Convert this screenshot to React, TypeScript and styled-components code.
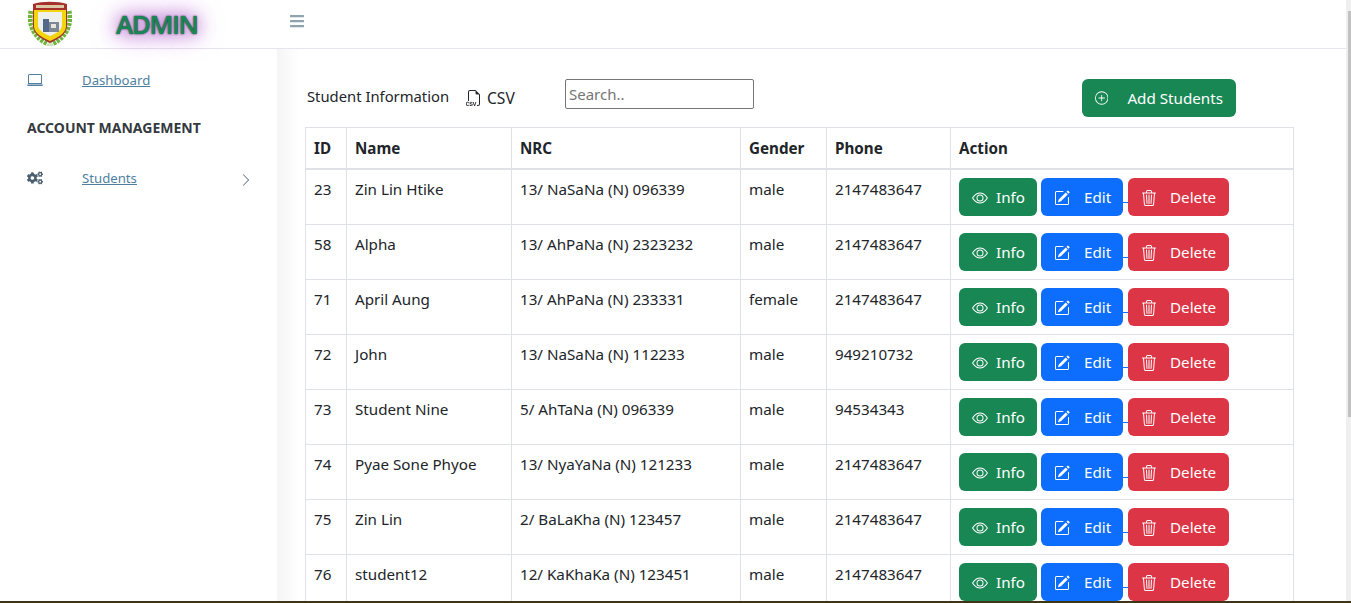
import React from "react";
import styled, { createGlobalStyle } from "styled-components";
import { BsEye, BsFiletypeCsv, BsChevronRight, BsLaptop, BsPencilSquare, BsPlusCircle, BsTrash3 } from "react-icons/bs";
import { FaBars, FaCogs } from "react-icons/fa";

const students = [
  { id: 23, name: "Zin Lin Htike", nrc: "13/ NaSaNa (N) 096339", gender: "male", phone: "2147483647" },
  { id: 58, name: "Alpha", nrc: "13/ AhPaNa (N) 2323232", gender: "male", phone: "2147483647" },
  { id: 71, name: "April Aung", nrc: "13/ AhPaNa (N) 233331", gender: "female", phone: "2147483647" },
  { id: 72, name: "John", nrc: "13/ NaSaNa (N) 112233", gender: "male", phone: "949210732" },
  { id: 73, name: "Student Nine", nrc: "5/ AhTaNa (N) 096339", gender: "male", phone: "94534343" },
  { id: 74, name: "Pyae Sone Phyoe", nrc: "13/ NyaYaNa (N) 121233", gender: "male", phone: "2147483647" },
  { id: 75, name: "Zin Lin", nrc: "2/ BaLaKha (N) 123457", gender: "male", phone: "2147483647" },
  { id: 76, name: "student12", nrc: "12/ KaKhaKa (N) 123451", gender: "male", phone: "2147483647" },
];

const Logo = () => (
  <svg width="44" height="46" viewBox="0 0 44 46">
    {/* laurel */}
    <path d="M3 10 C0 22 5 36 20 43" fill="none" stroke="#6fb23c" strokeWidth="5" strokeDasharray="3 1" />
    <path d="M41 10 C44 22 39 36 24 43" fill="none" stroke="#6fb23c" strokeWidth="5" strokeDasharray="3 1" />
    <path d="M22 40 L19 45 L25 45 Z" fill="#cfe3bd" />
    {/* shield */}
    <path d="M5 3 C14 0 30 0 39 3 L39 26 C38 34 30 38 22 42 C14 38 6 34 5 26 Z" fill="#a5302c" />
    <path d="M6 9 L38 9 L38 26 C37 33 29 37 22 40 C15 37 7 33 6 26 Z" fill="#f4d40e" />
    <path d="M10 11 L34 11 L34 25 C33 30 27 33 22 35 C17 33 11 30 10 25 Z" fill="#eef0ec" />
    <rect x="8" y="4" width="28" height="3" fill="#dcc9a8" />
    <rect x="15" y="18" width="6" height="13" fill="#54698a" />
    <rect x="21" y="21" width="10" height="10" fill="#7c8797" />
    <rect x="23" y="23" width="5" height="4" fill="#e9e7dc" />
  </svg>
);

export default function App() {
  return (
    <Page>
      <GlobalStyle />
      <Content>
        <Header>
          <LogoBox><Logo /></LogoBox>
          <Brand>ADMIN</Brand>
          <MenuToggle><FaBars size={16} /></MenuToggle>
        </Header>
        <Body>
          <Sidebar>
            <NavItem>
              <NavIcon $color="#4f7f9f"><BsLaptop size={16} /></NavIcon>
              <NavLink href="#">Dashboard</NavLink>
            </NavItem>
            <NavHeading>ACCOUNT MANAGEMENT</NavHeading>
            <NavItem>
              <NavIcon $color="#4c5f6e"><FaCogs size={16} /></NavIcon>
              <NavLink href="#">Students</NavLink>
              <NavArrow><BsChevronRight size={14} /></NavArrow>
            </NavItem>
          </Sidebar>
          <Main>
            <Toolbar>
              <ToolbarTitle>Student Information</ToolbarTitle>
              <CsvLink><BsFiletypeCsv size={16} />CSV</CsvLink>
              <SearchInput placeholder="Search.." />
              <AddButton><BsPlusCircle size={16} />Add Students</AddButton>
            </Toolbar>
            <Table>
              <thead>
                <tr>
                  <th>ID</th>
                  <th>Name</th>
                  <th>NRC</th>
                  <th>Gender</th>
                  <th>Phone</th>
                  <th>Action</th>
                </tr>
              </thead>
              <tbody>
                {students.map((s) => (
                  <tr key={s.id}>
                    <td>{s.id}</td>
                    <td>{s.name}</td>
                    <td>{s.nrc}</td>
                    <td>{s.gender}</td>
                    <td>{s.phone}</td>
                    <td>
                      <Actions>
                        <ActionButton $bg="#198754" $gap={8} $width={78}><BsEye size={16} />Info</ActionButton>
                        <EditLink>
                          <ActionButton $bg="#0d6efd" $gap={14} $width={82}><BsPencilSquare size={16} />Edit</ActionButton>
                        </EditLink>
                        <ActionButton $bg="#dc3545" $gap={13} $width={101}><BsTrash3 size={16} />Delete</ActionButton>
                      </Actions>
                    </td>
                  </tr>
                ))}
              </tbody>
            </Table>
          </Main>
        </Body>
      </Content>
      <ScrollTrack><ScrollThumb /></ScrollTrack>
      <BottomStrip />
    </Page>
  );
}

const GlobalStyle = createGlobalStyle`
  html, body {
    margin: 0;
    height: 100%;
    overflow: hidden;
    background: #fff;
  }
  body {
    font-family: "Noto Sans", "Open Sans", sans-serif;
    font-size: 15.2px;
    color: #212529;
  }
`;

const Page = styled.div`
  position: relative;
  height: 603px;
  display: flex;
  overflow: hidden;
`;

const Content = styled.div`
  flex: 1;
  min-width: 0;
  display: flex;
  flex-direction: column;
`;

const Header = styled.header`
  flex: none;
  height: 48px;
  display: flex;
  align-items: center;
  padding-left: 28px;
  border-bottom: 1px solid #e6e4ee;
`;

const LogoBox = styled.div`
  width: 44px;
  height: 46px;
  margin-right: 44px;
  filter: blur(0.4px);
`;

const Brand = styled.div`
  width: 173px;
  font-family: "Open Sans", sans-serif;
  font-size: 26px;
  font-weight: 600;
  letter-spacing: -1.4px;
  color: #198754;
  text-shadow: 0 0 2px #112, 0 0 16px #a850c4, 0 0 26px #a850c4;
`;

const MenuToggle = styled.div`
  display: flex;
  color: #8fa3ad;
  margin-top: -7px;
`;

const Body = styled.div`
  flex: 1;
  min-height: 0;
  display: flex;
`;

const Sidebar = styled.aside`
  flex: none;
  width: 277px;
  box-sizing: border-box;
  padding: 19px 27px 0;
`;

const NavItem = styled.div`
  display: flex;
  align-items: center;
  height: 24px;
  margin-bottom: 24px;
`;

const NavIcon = styled.span<{ $color: string }>`
  display: flex;
  width: 55px;
  color: ${(p) => p.$color};
`;

const NavLink = styled.a`
  color: #4f7f9f;
  font-size: 13.2px;
  text-decoration: underline;
`;

const NavArrow = styled.span`
  display: flex;
  margin-left: auto;
  margin-right: -3px;
  margin-top: 3px;
  color: #5e6f7c;
`;

const NavHeading = styled.div`
  font-size: 14px;
  font-weight: 700;
  color: #343a40;
  height: 24px;
  line-height: 24px;
  margin-bottom: 26px;
`;

const Main = styled.main`
  flex: 1;
  min-width: 0;
  box-sizing: border-box;
  padding: 30px 0 0 28px;
  background: linear-gradient(to right, #f5f5f5, #fff 22px);
`;

const Toolbar = styled.div`
  display: flex;
  align-items: center;
  box-sizing: border-box;
  width: 931px;
  height: 38px;
  margin-bottom: 10px;
  padding-left: 2px;
`;

const ToolbarTitle = styled.div`
  width: 159px;
  font-size: 14.8px;
  margin-top: -4px;
`;

const CsvLink = styled.div`
  display: flex;
  align-items: center;
  gap: 5px;
  width: 99px;
  font-size: 15.6px;
`;

const SearchInput = styled.input`
  box-sizing: border-box;
  width: 189px;
  height: 30px;
  margin-top: -8px;
  padding: 0 3px;
  border: 1px solid #767676;
  border-radius: 2px;
  font: inherit;
  font-size: 15px;
  &::placeholder {
    color: #757575;
  }
`;

const AddButton = styled.button`
  display: flex;
  align-items: center;
  gap: 19px;
  box-sizing: border-box;
  width: 154px;
  height: 38px;
  margin-left: auto;
  padding: 0 13px;
  border: 0;
  border-radius: 6px;
  background: #198754;
  color: #fff;
  font: inherit;
  white-space: nowrap;
`;

const Table = styled.table`
  width: 989px;
  table-layout: fixed;
  border-collapse: collapse;
  th, td {
    border: 1px solid #dee2e6;
    padding: 8px;
    text-align: left;
    vertical-align: top;
  }
  th {
    line-height: 24px;
    font-weight: 700;
    border-bottom: 2px solid #dee2e6;
  }
  td {
    line-height: 22px;
  }
  th:nth-child(1) { width: 41px; box-sizing: border-box; }
  th:nth-child(2) { width: 165px; box-sizing: border-box; }
  th:nth-child(3) { width: 229px; box-sizing: border-box; }
  th:nth-child(4) { width: 86px; box-sizing: border-box; }
  th:nth-child(5) { width: 124px; box-sizing: border-box; }
`;

const Actions = styled.div`
  display: flex;
  gap: 4px;
`;

const EditLink = styled.span`
  display: flex;
  position: relative;
  margin-right: 1px;
  &::after {
    content: "";
    position: absolute;
    left: 100%;
    top: 24px;
    width: 5px;
    height: 1px;
    background: #0d6efd;
  }
`;

const ActionButton = styled.button<{ $bg: string; $gap: number; $width: number }>`
  display: flex;
  align-items: center;
  gap: ${(p) => p.$gap}px;
  box-sizing: border-box;
  width: ${(p) => p.$width}px;
  height: 38px;
  padding: 0 0 0 13px;
  border: 0;
  border-radius: 6px;
  background: ${(p) => p.$bg};
  color: #fff;
  font: inherit;
  svg {
    margin-top: 2px;
  }
`;

const ScrollTrack = styled.div`
  flex: none;
  width: 5px;
  background: #efefef;
`;

const ScrollThumb = styled.div`
  width: 3px;
  height: 406px;
  margin: 11px 0 0 2px;
  background: #c1c1c1;
`;

const BottomStrip = styled.div`
  position: absolute;
  left: 0;
  right: 0;
  bottom: 0;
  height: 2px;
  background: #3f3515;
`;
